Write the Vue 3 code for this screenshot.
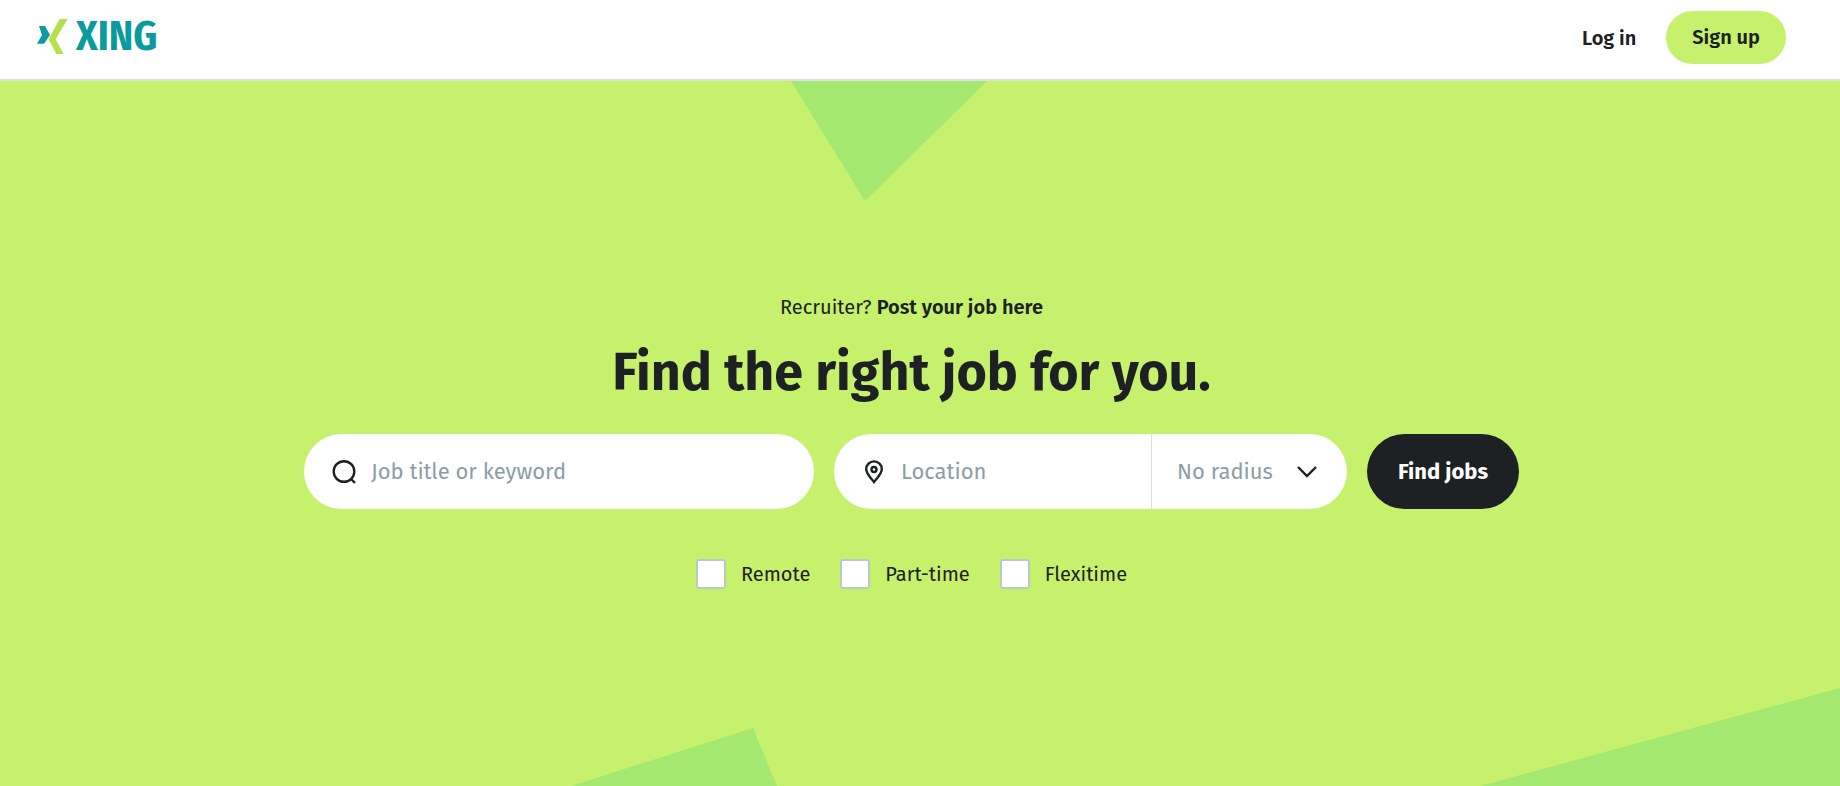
<script setup>
import { ref } from 'vue'

const keyword = ref('')
const location = ref('')
const radius = ref('')
const radii = [10, 20, 50, 100]
const filters = ref([
  { id: 'remote', label: 'Remote', checked: false },
  { id: 'part-time', label: 'Part-time', checked: false },
  { id: 'flexitime', label: 'Flexitime', checked: false },
])
</script>

<template>
  <div class="page">
    <header class="header">
      <a class="logo" href="#" aria-label="XING">
        <svg class="logo-mark" viewBox="52 57 93 105" aria-hidden="true">
          <path class="mark-teal" d="M58 78h18l15 27-18 26H52l15-26z" />
          <path class="mark-lime" d="M120 57h24l-36 61 24 44h-22l-23-44z" />
        </svg>
        <span class="logo-name">XING</span>
      </a>
      <nav class="nav">
        <a class="login" href="#">Log in</a>
        <a class="signup" href="#">Sign up</a>
      </nav>
    </header>

    <main class="hero">
      <svg class="shapes" viewBox="0 0 1840 705" preserveAspectRatio="none" aria-hidden="true">
        <path d="M791 0H987L865 120z" />
        <path d="M571 705L753 647L777 705z" />
        <path d="M1480 705L1840 607V705z" />
      </svg>

      <div class="content">
        <p class="recruiter">Recruiter? <a href="#">Post your job here</a></p>
        <h1>Find the right job for you.</h1>

        <form class="search" @submit.prevent>
          <div class="field">
            <svg class="icon" viewBox="0 0 24 24" aria-hidden="true">
              <circle cx="12" cy="11.5" r="10.3" />
              <path d="M18.5 18.5L23 23" />
            </svg>
            <input v-model="keyword" type="text" placeholder="Job title or keyword" aria-label="Job title or keyword" />
          </div>
          <div class="field place">
            <svg class="icon pin" viewBox="0 0 18 24" aria-hidden="true">
              <path d="M9 22C5.500 17.500 1.200 13.500 1.200 9.200a7.800 7.800 0 0 1 15.600 0C16.800 13.500 12.500 17.500 9 22z" />
              <circle cx="9" cy="9.500" r="2.500" />
            </svg>
            <input v-model="location" type="text" placeholder="Location" aria-label="Location" />
            <div class="radius">
              <select v-model="radius" aria-label="Radius">
                <option value="">No radius</option>
                <option v-for="km in radii" :key="km" :value="km">{{ km }} km</option>
              </select>
              <svg class="chevron" viewBox="0 0 20 12" aria-hidden="true">
                <path d="M1 1l9 9 9-9" />
              </svg>
            </div>
          </div>
          <button class="submit" type="submit">Find jobs</button>
        </form>

        <div class="filters">
          <label v-for="f in filters" :key="f.id" :for="f.id">
            <input :id="f.id" v-model="f.checked" type="checkbox" />
            {{ f.label }}
          </label>
        </div>
      </div>
    </main>
  </div>
</template>

<style>
body {
  margin: 0;
}
</style>

<style scoped>
.page {
  display: flex;
  flex-direction: column;
  min-height: 100vh;
  font-family: "Fira Sans", "Noto Sans", sans-serif;
  font-size: 20px;
  line-height: 28px;
  color: #1d2124;
}

a {
  color: inherit;
  text-decoration: none;
}

.header {
  display: flex;
  align-items: center;
  justify-content: space-between;
  padding: 11px 54px 15px 37px;
  background: #fff;
  border-bottom: 2px solid #dbe3dc;
}

.logo {
  display: flex;
  align-items: center;
  gap: 8px;
  padding-bottom: 2px;
}

.logo-mark {
  width: 31px;
  height: 35px;
}

.mark-teal {
  fill: #0b9a9d;
}

.mark-lime {
  fill: #b7df4b;
}

.logo-name {
  font-family: "Fira Sans Condensed", "Liberation Sans Narrow", "Fira Sans", sans-serif;
  font-size: 41px;
  font-weight: 700;
  line-height: 40px;
  color: #0b9a9d;
}

.nav {
  display: flex;
  align-items: center;
  gap: 30px;
  font-weight: 600;
}

.signup {
  padding: 12px 26px 13px;
  border-radius: 27px;
  background: #c6f16d;
}

.hero {
  position: relative;
  flex: 1;
  padding: 212px 17px 0 0;
  background: #c6f16d;
}

.shapes {
  position: absolute;
  inset: 0;
  width: 100%;
  height: 100%;
  fill: #a5e86f;
}

.content {
  position: relative;
  max-width: 1215px;
  margin: 0 auto;
  text-align: center;
}

.recruiter {
  margin: 0;
}

.recruiter a {
  font-weight: 600;
}

h1 {
  margin: 18px 0 27px;
  font-size: 52px;
  font-weight: 700;
  line-height: 68px;
}

.search {
  display: flex;
  gap: 20px;
}

.field {
  display: flex;
  flex: 1;
  align-items: center;
  min-width: 0;
  height: 75px;
  padding-left: 28px;
  box-sizing: border-box;
  border-radius: 38px;
  background: #fff;
}

.place {
  padding-left: 31px;
}

.icon {
  flex: none;
  width: 24px;
  height: 24px;
  margin-right: 15px;
  fill: none;
  stroke: #1d2124;
  stroke-width: 2.4;
}

.pin {
  width: 18px;
  margin-right: 18px;
}

.field input,
select {
  flex: 1;
  min-width: 0;
  padding: 0;
  border: 0;
  outline: 0;
  background: transparent;
  font-family: inherit;
  font-size: 22px;
  line-height: 30px;
  color: #8b9ea4;
}

.field input::placeholder {
  color: #8b9ea4;
  opacity: 1;
}

.radius {
  display: flex;
  align-items: center;
  width: 196px;
  height: 100%;
  padding: 0 30px 0 25px;
  box-sizing: border-box;
  border-left: 1px solid #dcdfe1;
}

select {
  appearance: none;
}

.chevron {
  flex: none;
  width: 20px;
  height: 12px;
  fill: none;
  stroke: #1d2124;
  stroke-width: 2.4;
}

.submit {
  width: 152px;
  padding: 0;
  border: 0;
  border-radius: 38px;
  background: #1d2124;
  color: #fff;
  font-family: inherit;
  font-size: 22px;
  font-weight: 700;
}

.filters {
  display: flex;
  justify-content: center;
  gap: 30px;
  margin-top: 50px;
}

.filters label {
  display: flex;
  align-items: center;
  gap: 15px;
}

.filters input {
  appearance: none;
  width: 30px;
  height: 30px;
  margin: 0;
  border: 2px solid #b9c8cb;
  border-radius: 3px;
  background: #fff;
}

.filters input:checked {
  background: #1d2124;
}
</style>
